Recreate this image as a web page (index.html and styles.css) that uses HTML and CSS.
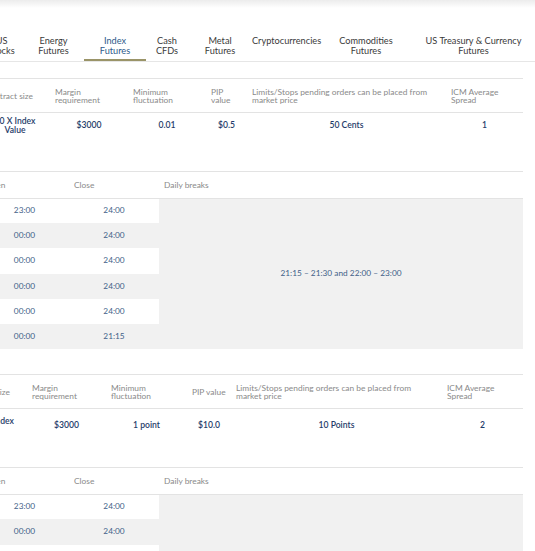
FILE: index.html
```html
<!DOCTYPE html>
<html lang="en">
<head>
<meta charset="utf-8">
<title>Index Futures</title>
<link rel="stylesheet" href="styles.css">
</head>
<body>
<div class="topshade"></div>
<div class="page">
  <nav class="tabs">
    <div class="tab">US<br>Stocks</div>
    <div class="tab">Energy<br>Futures</div>
    <div class="tab active">Index<br>Futures</div>
    <div class="tab">Cash<br>CFDs</div>
    <div class="tab">Metal<br>Futures</div>
    <div class="tab">Cryptocurrencies</div>
    <div class="tab">Commodities<br>Futures</div>
    <div class="tab">US Treasury &amp; Currency<br>Futures</div>
  </nav>

  <table class="spec spec-a">
    <colgroup>
      <col class="w70"><col class="w78"><col class="w78"><col class="w41"><col class="w199"><col class="w77">
    </colgroup>
    <thead>
      <tr>
        <th>Contract size</th>
        <th>Margin<br>requirement</th>
        <th>Minimum<br>fluctuation</th>
        <th>PIP<br>value</th>
        <th>Limits/Stops pending orders can be placed from<br>market price</th>
        <th>ICM Average<br>Spread</th>
      </tr>
    </thead>
    <tbody>
      <tr>
        <td class="first">50 X Index<br>Value</td>
        <td>$3000</td>
        <td>0.01</td>
        <td>$0.5</td>
        <td>50 Cents</td>
        <td>1</td>
      </tr>
    </tbody>
  </table>

  <table class="sched">
    <colgroup><col class="w89"><col class="w90"><col class="w364"></colgroup>
    <thead>
      <tr><th>Open</th><th>Close</th><th>Daily breaks</th></tr>
    </thead>
    <tbody>
      <tr><td>23:00</td><td>24:00</td><td class="breaks" rowspan="6">21:15 – 21:30 and 22:00 – 23:00</td></tr>
      <tr class="alt"><td>00:00</td><td>24:00</td></tr>
      <tr><td>00:00</td><td>24:00</td></tr>
      <tr class="alt"><td>00:00</td><td>24:00</td></tr>
      <tr><td>00:00</td><td>24:00</td></tr>
      <tr class="alt"><td>00:00</td><td>21:15</td></tr>
    </tbody>
  </table>

  <table class="spec spec-b">
    <colgroup>
      <col class="w47"><col class="w79"><col class="w81"><col class="w44"><col class="w211"><col class="w81">
    </colgroup>
    <thead>
      <tr>
        <th class="first"><span class="pull-h">Contract size</span></th>
        <th>Margin<br>requirement</th>
        <th>Minimum<br>fluctuation</th>
        <th>PIP value</th>
        <th>Limits/Stops pending orders can be placed from<br>market price</th>
        <th>ICM Average<br>Spread</th>
      </tr>
    </thead>
    <tbody>
      <tr>
        <td class="first"><span class="pull-d">10 X Index</span></td>
        <td>$3000</td>
        <td>1 point</td>
        <td>$10.0</td>
        <td>10 Points</td>
        <td>2</td>
      </tr>
    </tbody>
  </table>

  <table class="sched">
    <colgroup><col class="w89"><col class="w90"><col class="w364"></colgroup>
    <thead>
      <tr><th>Open</th><th>Close</th><th>Daily breaks</th></tr>
    </thead>
    <tbody>
      <tr><td>23:00</td><td>24:00</td><td class="breaks" rowspan="6">21:15 – 21:30 and 22:00 – 23:00</td></tr>
      <tr class="alt"><td>00:00</td><td>24:00</td></tr>
      <tr><td>00:00</td><td>24:00</td></tr>
      <tr class="alt"><td>00:00</td><td>24:00</td></tr>
      <tr><td>00:00</td><td>24:00</td></tr>
      <tr class="alt"><td>00:00</td><td>21:15</td></tr>
    </tbody>
  </table>
</div>
</body>
</html>
```

FILE: styles.css
```css
* { box-sizing: border-box; }

html, body {
  margin: 0;
  padding: 0;
  background: #fff;
  overflow: hidden;
}

body {
  font-family: Lato, "Open Sans", "Liberation Sans", sans-serif;
  color: #333;
}

.topshade {
  height: 8px;
  background: linear-gradient(#ececec, #ffffff);
}

.page {
  margin-left: -20px;
  width: 543px;
}

/* ---------- tabs ---------- */
.tabs {
  display: grid;
  grid-template-columns: 43px 61px 62px 42px 64px 68px 92px 123px;
  width: 555px;
  padding-top: 28px;
  border-bottom: 1px solid #e6e6e6;
}

.tab {
  font-size: 9.2px;
  line-height: 10px;
  text-align: center;
  color: #3a3a3a;
  height: 25px;
  padding-bottom: 5px;
  white-space: nowrap;
}

.tab.active {
  color: #2d5a8a;
  border-bottom: 2px solid #9a9468;
  padding-bottom: 3px;
}

/* ---------- tables ---------- */
table {
  border-collapse: collapse;
  table-layout: fixed;
  width: 543px;
}

.w70 { width: 70px; }
.w78 { width: 78px; }
.w41 { width: 41px; }
.w199 { width: 199px; }
.w77 { width: 77px; }
.w47 { width: 47px; }
.w79 { width: 79px; }
.w81 { width: 81px; }
.w44 { width: 44px; }
.w211 { width: 211px; }
.w89 { width: 89px; }
.w90 { width: 90px; }
.w364 { width: 364px; }

th {
  font-weight: normal;
  text-align: left;
  vertical-align: middle;
  color: #8a8a8a;
  font-size: 8.4px;
  line-height: 8px;
  padding: 0 5px;
  white-space: nowrap;
}

.spec {
  border-top: 1px solid #e3e3e3;
  border-bottom: 1px solid #e3e3e3;
}

.spec-a { margin-top: 16px; }
.spec-b { margin-top: 25px; }

.spec thead tr {
  height: 34px;
  border-bottom: 1px solid #e3e3e3;
}

.spec td {
  text-align: center;
  vertical-align: top;
  color: #1f3d6a;
  font-size: 8.6px;
  font-weight: 600;
  line-height: 9px;
  padding: 8px 2px 0;
  white-space: nowrap;
}

.spec tbody tr { height: 59px; }

.spec-a td.first { padding-top: 4px; }

.spec-b td { padding-top: 12px; }
.spec-b td.first {
  padding: 8px 0 0;
  text-align: left;
}
.spec-b th.first { padding: 0; }

.pull-h {
  display: inline-block;
  margin-left: -18px;
}

.pull-d {
  display: inline-block;
  margin-left: -7px;
}

.sched thead tr {
  height: 26px;
  border-bottom: 1px solid #e3e3e3;
}

.sched tbody tr { height: 25.2px; }

.sched td {
  text-align: center;
  vertical-align: middle;
  color: #3f5f88;
  font-size: 8.3px;
  line-height: 9px;
  padding: 0;
}

.sched tr.alt td { background: #f1f1f1; }

.sched td.breaks {
  background: #f1f1f1;
}
```
